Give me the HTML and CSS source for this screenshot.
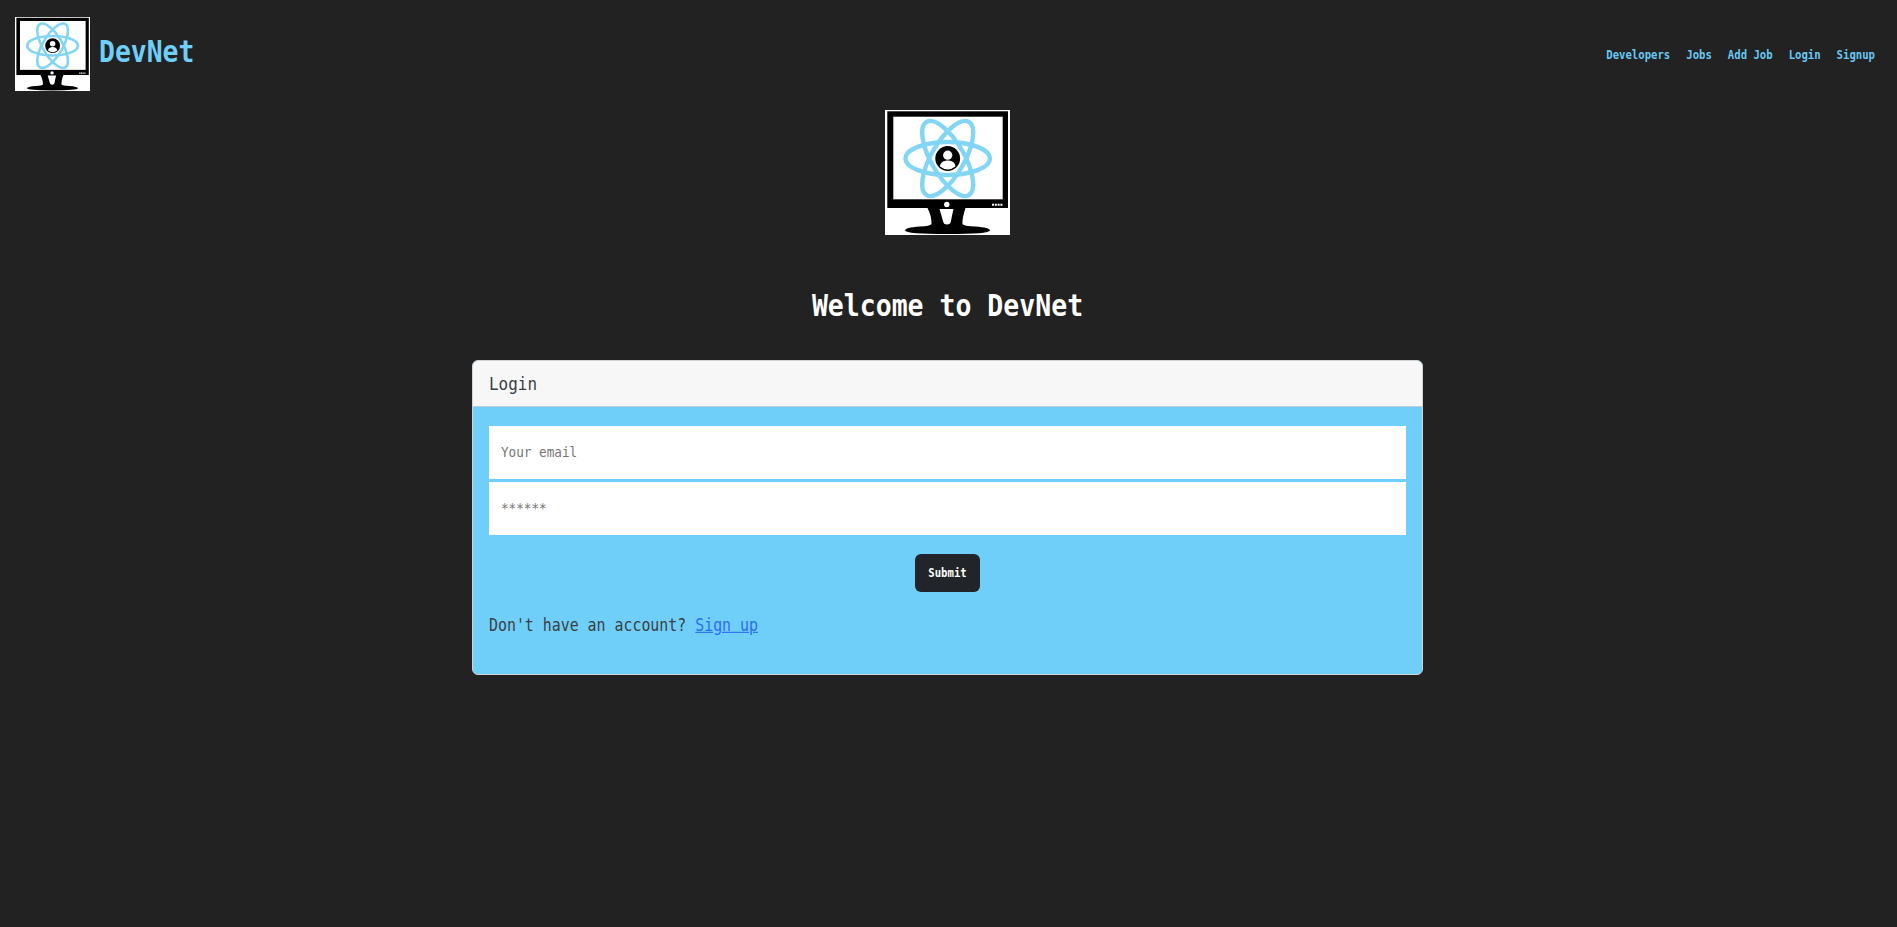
FILE: index.html
```html
<!DOCTYPE html>
<html lang="en">
<head>
<meta charset="utf-8">
<title>DevNet</title>
<link rel="stylesheet" href="styles.css">
</head>
<body>
<svg class="defs" width="0" height="0" aria-hidden="true">
  <symbol id="logo" viewBox="0 0 125 125" preserveAspectRatio="none">
    <rect width="125" height="125" fill="#fff"/>
    <rect x="2.3" y="1.3" width="120.7" height="96.7" fill="#000"/>
    <rect x="8.3" y="6.7" width="109.4" height="82.6" fill="#fff"/>
    <g fill="none" stroke="#82d5f5" stroke-width="4.4">
      <ellipse cx="62.7" cy="48.5" rx="42.3" ry="16.5"/>
      <ellipse cx="62.7" cy="48.5" rx="42.3" ry="16.5" transform="rotate(60 62.7 48.5)"/>
      <ellipse cx="62.7" cy="48.5" rx="42.3" ry="16.5" transform="rotate(120 62.7 48.5)"/>
    </g>
    <circle cx="62.7" cy="48.5" r="14" fill="#fff"/>
    <circle cx="62.7" cy="48.5" r="12.4" fill="#000"/>
    <circle cx="62.7" cy="45.2" r="4.6" fill="#fff"/>
    <path d="M55 56.5c0-8 15.400-8 15.400 0q-7.700 6-15.400 0z" fill="#fff"/>
    <circle cx="61.800" cy="94.500" r="2.700" fill="#fff"/>
    <path d="M107 94.800h11" stroke="#fff" stroke-width="2" stroke-dasharray="2 .8"/>
    <path d="M42.300 97.500H80.700Q77 108 77.500 114Q79 116 90 116.500Q105 117.500 105 120.500Q104 124 62.500 124Q21 124 20 120.500Q20 117.500 35 116.500Q45 116 46.500 114Q47 107 42.300 97.500z"/>
    <path d="M54.500 99H68.500Q67 105 66 111Q65.500 114.500 62 114.500Q58.500 114.500 58 111Z" fill="#fff"/>
  </symbol>
</svg>
<header class="navbar">
  <a class="brand"><svg class="brand-logo"><use href="#logo"/></svg><span class="tall">DevNet</span></a>
  <nav class="links">
    <a class="tall">Developers</a><a class="tall">Jobs</a><a class="tall">Add Job</a><a class="tall">Login</a><a class="tall">Signup</a>
  </nav>
</header>
<main class="page">
  <svg class="hero-logo"><use href="#logo"/></svg>
  <h1 class="title tall">Welcome to DevNet</h1>
  <section class="card">
    <div class="card-header"><span class="tall">Login</span></div>
    <form class="card-body">
      <label class="field"><span class="tall">Your email</span></label>
      <label class="field"><span class="tall">******</span></label>
      <button class="submit" type="button"><span class="tall">Submit</span></button>
      <p class="signup tall">Don't have an account? <a class="signup-link">Sign up</a></p>
    </form>
  </section>
</main>
</body>
</html>
```
FILE: styles.css
```css
* { box-sizing: border-box; }
body {
  margin: 0;
  min-height: 927px;
  background: #222;
  font-family: "DejaVu Sans Mono", monospace;
  color: #3a3f43;
}
.defs { display: block; }
.tall { display: inline-block; transform: scaleY(1.13); white-space: pre; }
.navbar {
  display: flex;
  justify-content: space-between;
  align-items: flex-start;
  height: 110px;
  padding: 17px 22px 0 15px;
}
.brand { display: flex; gap: 9px; color: #70cff9; font-size: 26.4px; line-height: 32px; font-weight: bold; }
.brand .tall { margin-top: 20px; }
.brand-logo { width: 75px; height: 74px; }
.links { display: flex; gap: 16px; margin-top: 30px; font-size: 10.63px; line-height: 18px; font-weight: bold; color: #68c8f3; }
.page { display: flex; flex-direction: column; align-items: center; }
.hero-logo { width: 125px; height: 125px; margin-right: 2px; }
.title { margin: 54px 2px 37px 0; color: #fff; font-size: 26.5px; line-height: 34px; font-weight: bold; }
.card {
  width: 951px;
  height: 315px;
  margin-right: 2px;
  border: 1px solid #d0d4d6;
  border-radius: 6px;
  background: #70cff9;
  overflow: hidden;
}
.card-header { height: 46px; padding: 8px 16px; background: #f7f7f7; border-bottom: 1px solid #bccfd9; font-size: 15.95px; line-height: 30px; }
.card-body { display: flex; flex-direction: column; padding: 19px 16px 0; }
.field { height: 53px; margin-bottom: 3px; padding: 15px 12px; background: #fff; font-size: 12.65px; line-height: 21px; color: #757575; }
.submit { align-self: center; width: 65px; height: 38px; margin-top: 16px; padding: 2px 0 0; border: 0; border-radius: 6px; background: #212529; color: #fff; font: bold 10.63px/18px "DejaVu Sans Mono", monospace; }
.signup { margin: 20px 0 0; font-size: 14.9px; line-height: 26px; }
.signup-link { color: #2d6df0; text-decoration: underline; }
```
